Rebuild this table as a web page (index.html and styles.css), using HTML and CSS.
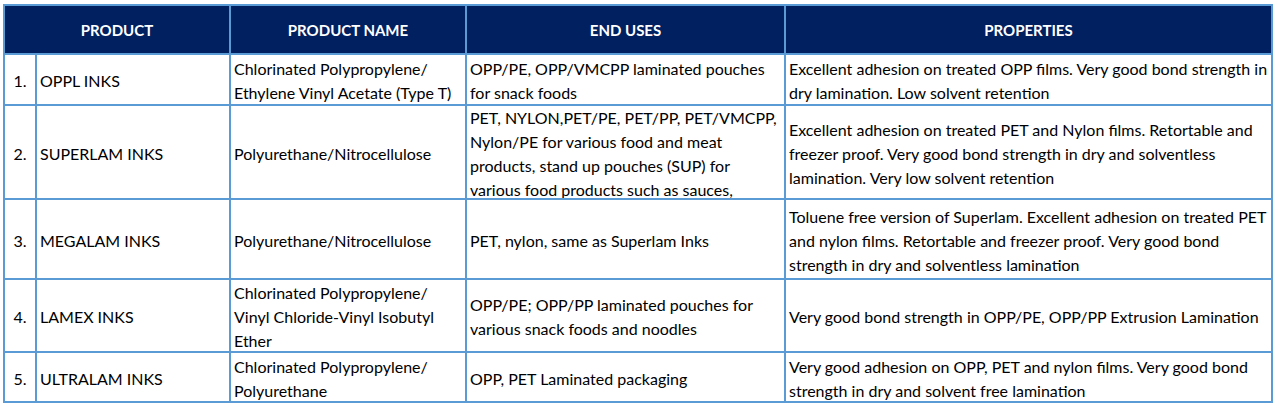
FILE: index.html
```html
<!DOCTYPE html>
<html lang="en">
<head>
<meta charset="utf-8">
<title>Laminating Inks</title>
<link rel="stylesheet" href="styles.css">
</head>
<body>
<div class="sheet">
  <div class="hd span2">PRODUCT</div>
  <div class="hd">PRODUCT NAME</div>
  <div class="hd">END USES</div>
  <div class="hd">PROPERTIES</div>

  <div class="c num">1.</div>
  <div class="c">OPPL INKS</div>
  <div class="c">Chlorinated Polypropylene/<br>Ethylene Vinyl Acetate (Type T)</div>
  <div class="c">OPP/PE, OPP/VMCPP laminated pouches<br>for snack foods</div>
  <div class="c">Excellent adhesion on treated OPP films. Very good bond strength in<br>dry lamination. Low solvent retention</div>

  <div class="c num">2.</div>
  <div class="c">SUPERLAM INKS</div>
  <div class="c">Polyurethane/Nitrocellulose</div>
  <div class="c">PET, NYLON,PET/PE, PET/PP, PET/VMCPP,<br>Nylon/PE for various food and meat<br>products, stand up pouches (SUP) for<br>various food products such as sauces,</div>
  <div class="c">Excellent adhesion on treated PET and Nylon films. Retortable and<br>freezer proof. Very good bond strength in dry and solventless<br>lamination. Very low solvent retention</div>

  <div class="c num">3.</div>
  <div class="c">MEGALAM INKS</div>
  <div class="c">Polyurethane/Nitrocellulose</div>
  <div class="c">PET, nylon, same as Superlam Inks</div>
  <div class="c">Toluene free version of Superlam. Excellent adhesion on treated PET<br>and nylon films. Retortable and freezer proof. Very good bond<br>strength in dry and solventless lamination</div>

  <div class="c num">4.</div>
  <div class="c">LAMEX INKS</div>
  <div class="c">Chlorinated Polypropylene/<br>Vinyl Chloride-Vinyl Isobutyl<br>Ether</div>
  <div class="c">OPP/PE; OPP/PP laminated pouches for<br>various snack foods and noodles</div>
  <div class="c">Very good bond strength in OPP/PE, OPP/PP Extrusion Lamination</div>

  <div class="c num">5.</div>
  <div class="c">ULTRALAM INKS</div>
  <div class="c">Chlorinated Polypropylene/<br>Polyurethane</div>
  <div class="c">OPP, PET Laminated packaging</div>
  <div class="c">Very good adhesion on OPP, PET and nylon films. Very good bond<br>strength in dry and solvent free lamination</div>
</div>
</body>
</html>
```
FILE: styles.css
```css
html, body {
  margin: 0;
  background: #ffffff;
}

body {
  padding: 4px 0 0 3px;
  font-family: "Lato", "Liberation Sans", sans-serif;
  font-size: 16px;
  color: #000000;
}

.sheet {
  display: grid;
  grid-template-columns: 30px 192px 234px 317px 485px;
  grid-template-rows: 47px 49px 92px 78px 71px 48px;
  gap: 2px;
  padding: 2px;
  background: #5b9bd5;
  width: max-content;
}

.hd {
  background: #002060;
  color: #ffffff;
  font-weight: 700;
  font-size: 15px;
  display: flex;
  align-items: center;
  justify-content: center;
}

.span2 {
  grid-column: span 2;
}

.c {
  background: #ffffff;
  display: flex;
  align-items: center;
  padding: 3px 2px 0 3px;
  line-height: 24px;
  white-space: nowrap;
  overflow: hidden;
}

.num {
  justify-content: center;
  padding: 3px 0 0 0;
}
```
